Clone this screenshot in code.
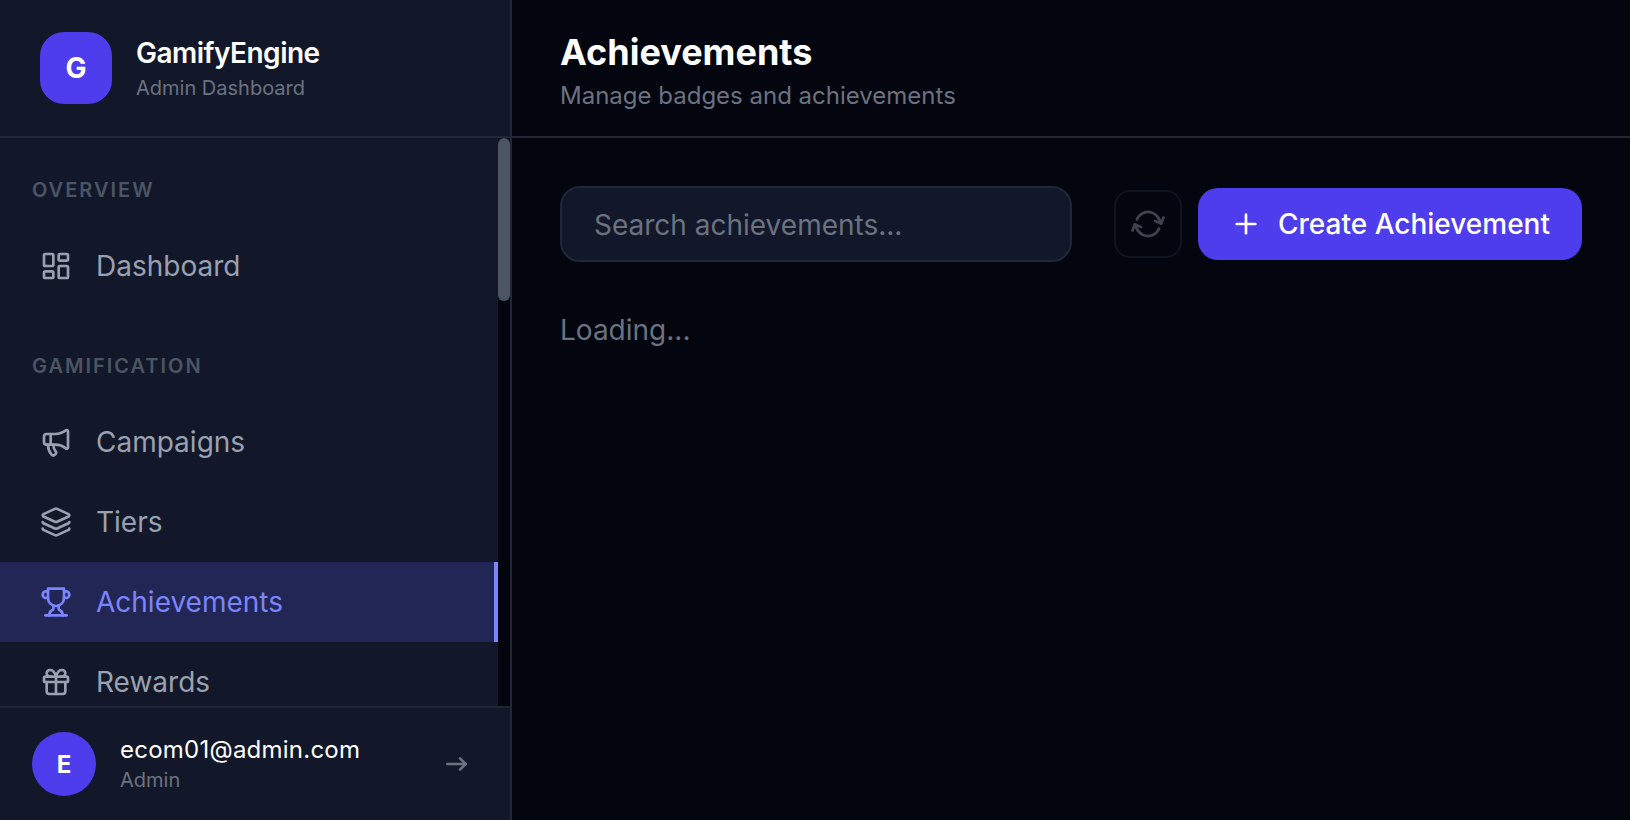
<div class="app">
  <aside class="sidebar">
    <div class="brand">
      <div class="logo">G</div>
      <div class="brand-text">
        <div class="brand-name">GamifyEngine</div>
        <div class="brand-sub">Admin Dashboard</div>
      </div>
    </div>
    <div class="nav-wrap">
      <nav class="nav">
        <div class="section-label first">Overview</div>
        <a class="item">
          <svg class="icon" viewBox="0 0 24 24"><rect width="7" height="9" x="3" y="3" rx="1"/><rect width="7" height="5" x="14" y="3" rx="1"/><rect width="7" height="9" x="14" y="12" rx="1"/><rect width="7" height="5" x="3" y="16" rx="1"/></svg>
          <span>Dashboard</span>
        </a>
        <div class="section-label">Gamification</div>
        <a class="item">
          <svg class="icon" viewBox="0 0 24 24"><path d="M11 6a13 13 0 0 0 8.4-2.8A1 1 0 0 1 21 4v12a1 1 0 0 1-1.6.8A13 13 0 0 0 11 14H5a2 2 0 0 1-2-2V8a2 2 0 0 1 2-2z"/><path d="M6 14a12 12 0 0 0 2.4 7.2 2 2 0 0 0 3.2-2.4A8 8 0 0 1 10 14"/><path d="M8 6v8"/></svg>
          <span>Campaigns</span>
        </a>
        <a class="item">
          <svg class="icon" viewBox="0 0 24 24"><path d="M12.83 2.18a2 2 0 0 0-1.66 0L2.6 6.08a1 1 0 0 0 0 1.83l8.58 3.91a2 2 0 0 0 1.66 0l8.58-3.9a1 1 0 0 0 0-1.83z"/><path d="M2 12a1 1 0 0 0 .58.91l8.6 3.91a2 2 0 0 0 1.65 0l8.58-3.9A1 1 0 0 0 22 12"/><path d="M2 17a1 1 0 0 0 .58.91l8.6 3.91a2 2 0 0 0 1.65 0l8.58-3.9A1 1 0 0 0 22 17"/></svg>
          <span>Tiers</span>
        </a>
        <a class="item active">
          <svg class="icon" viewBox="0 0 24 24"><path d="M6 9H4.5a2.5 2.5 0 0 1 0-5H6"/><path d="M18 9h1.5a2.5 2.5 0 0 0 0-5H18"/><path d="M4 22h16"/><path d="M10 14.66V17c0 .55-.47.98-.97 1.21C7.85 18.75 7 20.24 7 22"/><path d="M14 14.66V17c0 .55.47.98.97 1.21C16.15 18.75 17 20.24 17 22"/><path d="M18 2H6v7a6 6 0 0 0 12 0V2Z"/></svg>
          <span>Achievements</span>
        </a>
        <a class="item">
          <svg class="icon" viewBox="0 0 24 24"><rect x="3" y="8" width="18" height="4" rx="1"/><path d="M12 8v13"/><path d="M19 12v7a2 2 0 0 1-2 2H7a2 2 0 0 1-2-2v-7"/><path d="M7.5 8a2.5 2.5 0 0 1 0-5A4.8 8 0 0 1 12 8a4.8 8 0 0 1 4.5-5 2.5 2.5 0 0 1 0 5"/></svg>
          <span>Rewards</span>
        </a>
      </nav>
      <div class="track"><div class="thumb"></div></div>
    </div>
    <div class="user">
      <div class="avatar">E</div>
      <div class="user-text">
        <div class="user-mail">ecom01@admin.com</div>
        <div class="user-role">Admin</div>
      </div>
      <svg class="logout" viewBox="0 0 24 24"><path d="M2.3 12h18.4"/><path d="m15 6.3 5.7 5.7-5.7 5.7"/></svg>
    </div>
  </aside>

  <main class="main">
    <header class="top">
      <h1>Achievements</h1>
      <p>Manage badges and achievements</p>
    </header>
    <section class="content">
      <div class="toolbar">
        <input class="search" placeholder="Search achievements..." />
        <div class="actions">
          <button class="refresh" aria-label="Refresh">
            <svg viewBox="0 0 24 24"><path d="M3 12a9 9 0 0 1 9-9 9.75 9.75 0 0 1 6.74 2.74L21 8"/><path d="M21 3v5h-5"/><path d="M21 12a9 9 0 0 1-9 9 9.75 9.75 0 0 1-6.74-2.74L3 16"/><path d="M8 16H3v5"/></svg>
          </button>
          <button class="create">
            <svg viewBox="0 0 24 24"><path d="M5 12h14"/><path d="M12 5v14"/></svg>
            <span>Create Achievement</span>
          </button>
        </div>
      </div>
      <div class="loading">Loading...</div>
    </section>
  </main>
</div>

<style>
  :global(body) {
    margin: 0;
    background: #03050f;
    font-family: Inter, "Noto Sans", sans-serif;
    overflow: hidden;
  }
  svg {
    fill: none;
    stroke: currentColor;
    stroke-width: 2;
    stroke-linecap: round;
    stroke-linejoin: round;
    flex: none;
  }
  .app {
    display: flex;
    height: 820px;
    width: 1630px;
    overflow: hidden;
  }
  .sidebar {
    width: 512px;
    flex: none;
    box-sizing: border-box;
    display: flex;
    flex-direction: column;
    background: #121829;
    border-right: 2px solid #1f2738;
  }
  .brand {
    height: 138px;
    flex: none;
    box-sizing: border-box;
    padding: 32px 40px;
    display: flex;
    align-items: center;
    gap: 24px;
    border-bottom: 2px solid #1f2738;
  }
  .logo {
    width: 72px;
    height: 72px;
    border-radius: 24px;
    background: #4e3ded;
    color: #fff;
    font-size: 28px;
    font-weight: 700;
    display: flex;
    align-items: center;
    justify-content: center;
  }
  .brand-text { padding-bottom: 1px; }
  .brand-name {
    color: #fff;
    font-size: 28px;
    line-height: 39px;
    font-weight: 600;
    letter-spacing: -0.5px;
  }
  .brand-sub {
    color: #6b7280;
    font-size: 20px;
    line-height: 28px;
    margin-top: 1px;
  }
  .nav-wrap {
    flex: 1;
    min-height: 0;
    display: flex;
  }
  .nav {
    flex: 1;
    min-width: 0;
    overflow: hidden;
    padding-top: 38px;
    box-sizing: border-box;
  }
  .track {
    width: 12px;
    flex: none;
    background: #03050f;
  }
  .thumb {
    height: 163px;
    background: #4b5563;
    border-radius: 12px;
  }
  .section-label {
    margin: 46px 0 22px;
    padding-left: 32px;
    color: #4b5563;
    font-size: 20px;
    line-height: 28px;
    font-weight: 600;
    letter-spacing: 2px;
    text-transform: uppercase;
  }
  .section-label.first { margin-top: 0; }
  .item {
    height: 80px;
    box-sizing: border-box;
    display: flex;
    align-items: center;
    gap: 24px;
    padding-left: 40px;
    color: #99a1b0;
    font-size: 28px;
  }
  .icon { width: 32px; height: 32px; }
  .item.active {
    background: #212654;
    color: #7b85fb;
    border-right: 4px solid #7b85fb;
  }
  .user {
    height: 114px;
    flex: none;
    box-sizing: border-box;
    border-top: 2px solid #1f2738;
    display: flex;
    align-items: center;
    padding: 0 32px;
    gap: 24px;
  }
  .avatar {
    width: 64px;
    height: 64px;
    border-radius: 50%;
    background: #4e3ded;
    color: #fff;
    font-size: 24px;
    font-weight: 700;
    display: flex;
    align-items: center;
    justify-content: center;
    flex: none;
  }
  .user-text { flex: 1; min-width: 0; padding-bottom: 1px; }
  .user-mail {
    color: #fff;
    font-size: 24px;
    line-height: 32px;
    font-weight: 400;
    letter-spacing: 0.24px;
  }
  .user-role {
    color: #6b7280;
    font-size: 20px;
    line-height: 28px;
  }
  .logout {
    width: 24px;
    height: 24px;
    color: #6b7280;
    stroke-width: 2.6;
    margin-right: 9px;
  }
  .main {
    flex: 1;
    min-width: 0;
    display: flex;
    flex-direction: column;
  }
  .top {
    height: 138px;
    flex: none;
    box-sizing: border-box;
    padding: 2px 48px 0;
    border-bottom: 2px solid #1f2738;
    display: flex;
    flex-direction: column;
    justify-content: center;
  }
  h1 {
    margin: 0;
    color: #fff;
    font-size: 36px;
    line-height: 52px;
    font-weight: 700;
  }
  .top p {
    margin: 2px 0 0;
    color: #6b7280;
    font-size: 24px;
    line-height: 32px;
  }
  .content { padding: 48px; }
  .toolbar {
    display: flex;
    align-items: center;
    justify-content: space-between;
  }
  .search {
    width: 512px;
    height: 76px;
    box-sizing: border-box;
    background: #121829;
    border: 2px solid #1f2738;
    border-radius: 20px;
    padding: 2px 32px 0;
    font: 400 28px Inter, sans-serif;
    color: #fff;
    outline: none;
  }
  .search::placeholder { color: #6b7280; opacity: 1; }
  .actions {
    display: flex;
    align-items: center;
    gap: 16px;
  }
  .refresh {
    width: 68px;
    height: 68px;
    padding: 0;
    box-sizing: border-box;
    border-radius: 16px;
    background: transparent;
    border: 2px solid #1f2738;
    color: #8a8f9c;
    opacity: 0.45;
    display: flex;
    align-items: center;
    justify-content: center;
  }
  .refresh svg { width: 32px; height: 32px; transform: rotate(22deg); }
  .create {
    height: 72px;
    width: 384px;
    box-sizing: border-box;
    border: 0;
    border-radius: 20px;
    background: #4e3ded;
    color: #fff;
    font: 500 28px Inter, sans-serif;
    display: flex;
    align-items: center;
    justify-content: center;
    gap: 16px;
  }
  .create svg { width: 32px; height: 32px; }
  .loading {
    margin-top: 48px;
    color: #6b7280;
    font-size: 28px;
    line-height: 40px;
  }
</style>
